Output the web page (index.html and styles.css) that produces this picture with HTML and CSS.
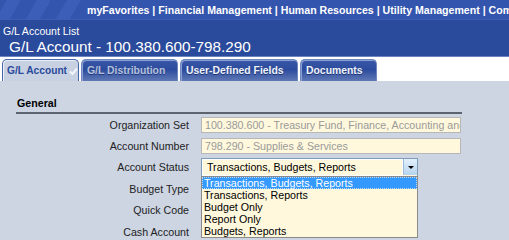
FILE: index.html
```html
<!DOCTYPE html>
<html lang="en">
<head>
    <meta name="viewport" content="width=device-width, initial-scale=1">
    <title>G/L Account</title>
    <link rel="stylesheet" href="styles.css">
</head>
<body>
    <div class="topbar">
        <div class="stripes"></div>
        <div class="menu">myFavorites | Financial Management | Human Resources | Utility Management | Community Development</div>
    </div>

    <div class="header">
        <div class="crumb">G/L Account List</div>
        <h1>G/L Account - 100.380.600-798.290</h1>
    </div>

    <div class="tabs">
        <div class="tab active">G/L Account<svg class="check" width="9" height="8" viewBox="0 0 9 8"><path d="M1 4.5 L3.5 7 L8 1.5" fill="none" stroke="#f2f5fa" stroke-width="2"/></svg></div>
        <div class="tab disabled">G/L Distribution</div>
        <div class="tab">User-Defined Fields</div>
        <div class="tab">Documents</div>
    </div>

    <div class="content">
        <div class="section">General</div>

        <div class="row">
            <span class="label">Organization Set</span>
            <div class="field readonly">100.380.600 - Treasury Fund, Finance, Accounting and Budget</div>
        </div>
        <div class="row">
            <span class="label">Account Number</span>
            <div class="field readonly">798.290 - Supplies &amp; Services</div>
        </div>
        <div class="row">
            <span class="label">Account Status</span>
            <div class="select">
                <span class="value">Transactions, Budgets, Reports</span>
                <span class="arrow"></span>
                <ul class="options">
                    <li class="selected">Transactions, Budgets, Reports</li>
                    <li>Transactions, Reports</li>
                    <li>Budget Only</li>
                    <li>Report Only</li>
                    <li>Budgets, Reports</li>
                </ul>
            </div>
        </div>
        <div class="row">
            <span class="label">Budget Type</span>
        </div>
        <div class="row">
            <span class="label">Quick Code</span>
        </div>
        <div class="row">
            <span class="label">Cash Account</span>
        </div>
    </div>
</body>
</html>
```

FILE: styles.css
```css
body {
    margin: 0;
    font-family: "Liberation Sans", Arial, sans-serif;
    font-size: 10.67px;
    background-color: #cdd5e3;
    overflow: hidden;
}
.topbar {
    height: 19px;
    background: #3455ad;
    display: flex;
    align-items: center;
    border-bottom: 1px solid #3d5db5;
    white-space: nowrap;
    overflow: hidden;
}
.stripes {
    width: 86px;
    height: 19px;
    flex-shrink: 0;
    background: repeating-linear-gradient(-60deg, #3455ad 0px, #3455ad 14px, #3c5db8 14px, #3c5db8 26px);
}
.menu {
    color: white;
    font-weight: bold;
    font-size: 10.6px;
    padding-left: 1px;
}
.header {
    background: #2a4a9b;
    color: white;
    height: 36px;
    padding-left: 3px;
}
.crumb {
    padding-top: 5px;
    font-size: 10.5px;
    line-height: 13px;
}
h1 {
    margin: 0;
    padding-left: 6px;
    font-size: 15.3px;
    font-weight: normal;
    line-height: 17px;
}
.tabs {
    background: white;
    height: 22px;
    padding: 2px 0 0 2px;
    display: flex;
    gap: 2px;
    border-top: 1px solid #6c84c2;
}
.tab {
    box-sizing: border-box;
    height: 22px;
    border: 1px solid #6f86bf;
    border-bottom: none;
    border-radius: 5px 5px 0 0;
    background: linear-gradient(#3a58a8, #2c4b9c 45%, #5f78b6);
    color: #eef2fa;
    font-weight: bold;
    font-size: 10.4px;
    padding-left: 5px;
    line-height: 21px;
    white-space: nowrap;
    overflow: hidden;
    text-shadow: 0 1px 0 #1d3575;
    box-shadow: inset 1px 1px 0 #8aa0d2;
}
.tab:nth-child(2) { width: 97px; }
.tab:nth-child(3) { width: 118px; }
.tab:nth-child(4) { width: 77px; }
.tab.active {
    width: 77px;
    background: #c8d1e2;
    color: #2a4a9b;
    border-color: #4a67ad;
    text-shadow: none;
    box-shadow: inset 1px 1px 0 #e9eef7;
    padding-left: 4px;
    font-size: 10.2px;
}
.tab.disabled {
    color: #b5c0dc;
    text-shadow: 0 1px 0 #203a80;
}
.check {
    margin-left: 2px;
    vertical-align: -1px;
}
.content {
    padding: 16px 0 0 16px;
}
.section {
    width: 445px;
    font-weight: bold;
    color: black;
    padding-bottom: 3px;
    padding-left: 1px;
    border-bottom: 2px solid #5c6470;
}
.row {
    display: flex;
    align-items: center;
    height: 21.4px;
    color: #222;
}
.label {
    width: 173px;
    text-align: right;
    margin-right: 12px;
    flex-shrink: 0;
}
.field {
    width: 255px;
    height: 14px;
    line-height: 14px;
    border: 1px solid #b7b7b7;
    background: #fff8dc;
    color: #9a9a9a;
    padding-left: 3px;
    white-space: nowrap;
    overflow: hidden;
}
.select {
    position: relative;
    width: 215px;
    height: 17px;
    border: 1px solid #7f9db9;
    background: #fff8dc;
    display: flex;
    align-items: center;
    color: black;
}
.select .value {
    flex: 1;
    padding-left: 4px;
    border: 1px solid white;
    height: 15px;
    line-height: 15px;
}
.arrow {
    width: 13px;
    height: 16px;
    background: linear-gradient(#e3f0fb, #b5d4ef);
    border-left: 1px solid #9cbad9;
    position: relative;
}
.arrow::after {
    content: "";
    position: absolute;
    left: 4px;
    top: 7px;
    border-left: 3px solid transparent;
    border-right: 3px solid transparent;
    border-top: 3px solid black;
}
.options {
    position: absolute;
    left: -1px;
    top: 17px;
    width: 215px;
    margin: 0;
    padding: 0;
    list-style: none;
    background: #fff8dc;
    border: 1px solid #8a8a8a;
    line-height: 12px;
}
.options li {
    padding-left: 2px;
}
.options li.selected {
    background: #3399ff;
    color: white;
    outline: 1px dotted #c0d8f0;
    outline-offset: -1px;
}
```
